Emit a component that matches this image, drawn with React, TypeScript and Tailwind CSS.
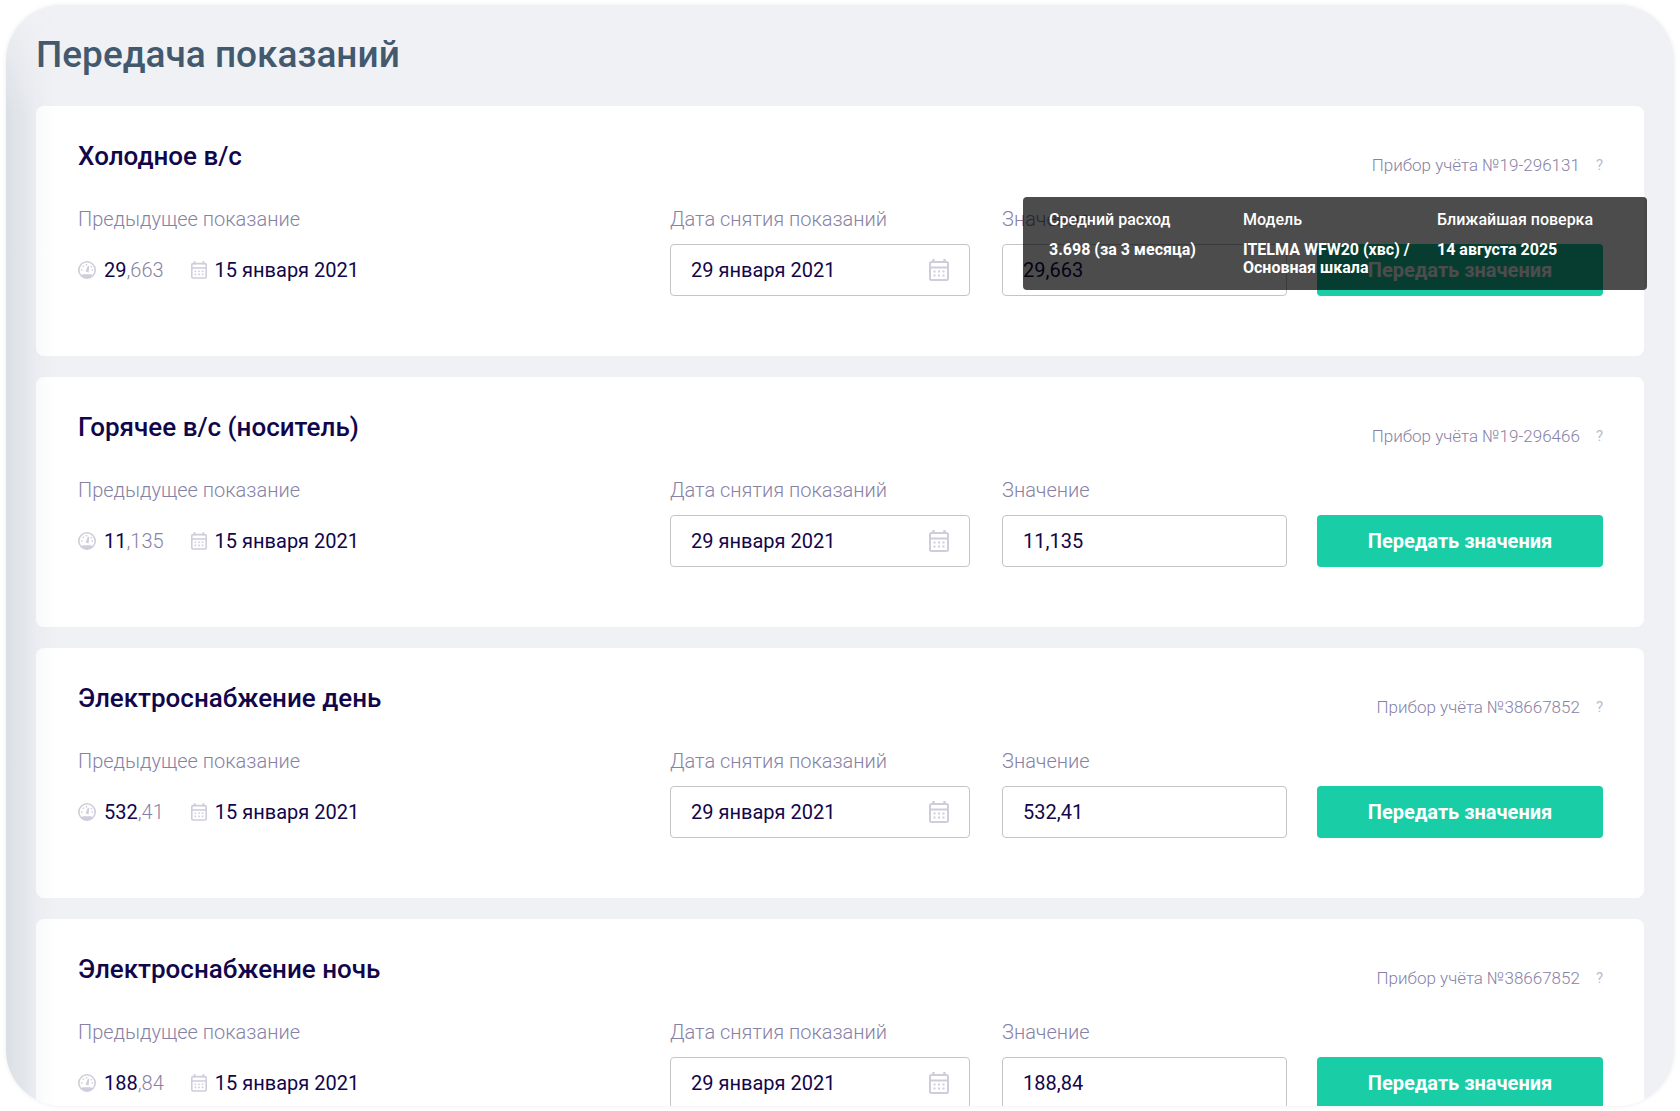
import React, { useId } from "react";

interface Reading {
    title: string;
    device: string;
    whole: string;
    fraction: string;
    details?: { label: string; value: string }[];
}

const readings: Reading[] = [
    {
        title: "Холодное в/с",
        device: "19-296131",
        whole: "29",
        fraction: "663",
        details: [
            { label: "Средний расход", value: "3.698 (за 3 месяца)" },
            { label: "Модель", value: "ITELMA WFW20 (хвс) / Основная шкала" },
            { label: "Ближайшая поверка", value: "14 августа 2025" },
        ],
    },
    { title: "Горячее в/с (носитель)", device: "19-296466", whole: "11", fraction: "135" },
    { title: "Электроснабжение день", device: "38667852", whole: "532", fraction: "41" },
    { title: "Электроснабжение ночь", device: "38667852", whole: "188", fraction: "84" },
];

function CalendarIcon({ className }: { className?: string }) {
    return (
        <svg viewBox="0 0 20 22" fill="none" className={className} aria-hidden="true">
            <rect x="1" y="3" width="18" height="18" rx="1.5" stroke="currentColor" strokeWidth="2" />
            <path d="M1 8.5h18" stroke="currentColor" strokeWidth="2" />
            <path d="M4.5 0v4M15.5 0v4" stroke="currentColor" strokeWidth="2.4" />
            <path
                d="M4.5 12.5h2M9 12.5h2M13.5 12.5h2M4.5 16.5h2M9 16.5h2M13.5 16.5h2"
                stroke="currentColor"
                strokeWidth="2"
            />
        </svg>
    );
}

function GaugeIcon({ className }: { className?: string }) {
    return (
        <svg viewBox="0 0 18 18" fill="none" className={className} aria-hidden="true">
            <circle cx="9" cy="9" r="8.2" stroke="currentColor" strokeWidth="1.6" />
            <path d="M3 14.5c1.5-2 3.5-1.2 6-1.2s4.5-.8 6 1.2c-3 3.5-9 3.5-12 0Z" fill="currentColor" />
            <path d="m8.5 10 2-5-.5 5.5Z" fill="currentColor" stroke="currentColor" strokeWidth="1.4" />
            <path
                d="M8.5 3v1.5M4.8 4.8l1 1M13.8 5.2l-1 1M3 9h1.5M15 9h-1.5"
                stroke="currentColor"
                strokeWidth="1.4"
            />
        </svg>
    );
}

function Details({ items }: { items: { label: string; value: string }[] }) {
    return (
        <dl
            role="tooltip"
            className="absolute top-[91px] -right-[3px] z-10 grid w-[624px] grid-cols-3 rounded bg-black/70 pt-3.5 pr-4 pb-[13px] pl-[26px] text-base leading-[18px] text-white"
        >
            {items.map((item) => (
                <div key={item.label}>
                    <dt className="font-medium whitespace-nowrap">{item.label}</dt>
                    <dd className="mt-3 pr-4 font-bold">{item.value}</dd>
                </div>
            ))}
        </dl>
    );
}

function ReadingCard({ reading }: { reading: Reading }) {
    const id = useId();

    return (
        <section className="relative rounded-lg bg-white pt-[35px] pr-[41px] pb-[60px] pl-[42px]">
            <div className="flex items-start justify-between">
                <h2 className="text-[26px] leading-[30px] font-medium text-[#12064b]">{reading.title}</h2>
                <div className="flex items-center gap-4 pt-3.5 text-[17px] leading-5 font-light text-[#8782a5]">
                    <span>Прибор учёта №{reading.device}</span>
                    <button type="button" aria-label="Подробнее" className="text-[15px] font-normal text-[#bdbacd]">
                        ?
                    </button>
                </div>
            </div>
            {reading.details && <Details items={reading.details} />}
            <form className="mt-8 flex items-end" onSubmit={(e) => e.preventDefault()}>
                <div className="flex-1">
                    <p className="text-[20px] leading-6 font-light text-[#8782a5]">Предыдущее показание</p>
                    <div className="mt-[13px] flex h-[52px] items-center text-[20px] text-[#12064b]">
                        <GaugeIcon className="mr-2 size-[18px] text-[#cfcddb]" />
                        <span>
                            {reading.whole}
                            <span className="font-light text-[#8782a5]">,{reading.fraction}</span>
                        </span>
                        <CalendarIcon className="mr-2 ml-[27px] h-[18px] w-4 text-[#cfcddb]" />
                        <span>15 января 2021</span>
                    </div>
                </div>
                <div className="w-[300px]">
                    <label htmlFor={`${id}-date`} className="block text-[20px] leading-6 font-light text-[#8782a5]">
                        Дата снятия показаний
                    </label>
                    <div className="mt-[13px] flex h-[52px] items-center rounded border border-[#c4c4c4] px-5">
                        <input
                            id={`${id}-date`}
                            defaultValue="29 января 2021"
                            className="min-w-0 flex-1 text-[20px] text-[#12064b] outline-none"
                        />
                        <CalendarIcon className="h-[22px] w-5 text-[#cfcddb]" />
                    </div>
                </div>
                <div className="ml-8 w-[285px]">
                    <label htmlFor={`${id}-value`} className="block text-[20px] leading-6 font-light text-[#8782a5]">
                        Значение
                    </label>
                    <input
                        id={`${id}-value`}
                        defaultValue={`${reading.whole},${reading.fraction}`}
                        className="mt-[13px] h-[52px] w-full rounded border border-[#c4c4c4] px-5 text-[20px] text-[#12064b] outline-none"
                    />
                </div>
                <button
                    type="submit"
                    className="ml-[30px] h-[52px] w-[286px] rounded bg-[#19cda6] text-[20px] font-bold text-white"
                >
                    Передать значения
                </button>
            </form>
        </section>
    );
}

export default function App() {
    return (
        <div className="h-screen bg-white px-[6px] py-[5px] font-[Roboto,sans-serif]">
            <main className="relative h-full overflow-hidden rounded-[56px] bg-[#f0f1f5] px-[30px] pt-7 shadow-[0_0_5px_rgba(0,0,0,0.08)]">
                <h1 className="text-[37px] leading-[44px] font-medium text-[#43596e]">Передача показаний</h1>
                <div className="mt-[29px] flex flex-col gap-[21px]">
                    {readings.map((reading) => (
                        <ReadingCard key={reading.title} reading={reading} />
                    ))}
                </div>
                {/* soft shade along the left edge */}
                <div className="pointer-events-none absolute inset-y-0 left-0 w-[50px] bg-linear-to-r from-[#7f9ba6]/20 via-[#7f9ba6]/5 via-60% to-transparent mask-t-from-[90%]" />
            </main>
        </div>
    );
}
